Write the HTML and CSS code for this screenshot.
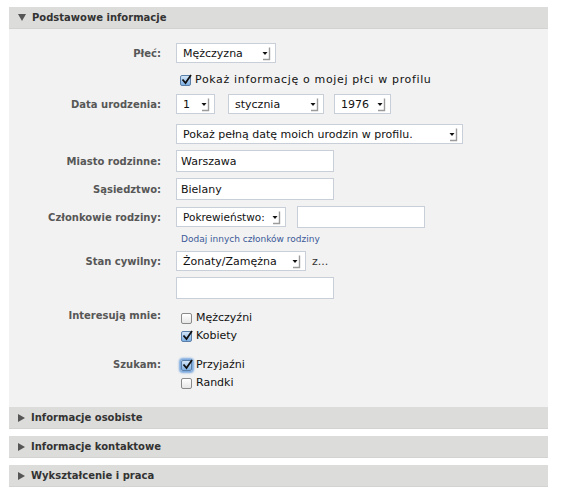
FILE: index.html
```html
<!DOCTYPE html>
<html lang="pl">
<head>
<meta charset="utf-8">
<link rel="stylesheet" href="styles.css">
</head>
<body>
<div class="panel">
  <div class="head open"><span class="tri-down"></span>Podstawowe informacje</div>
  <div class="body">
    <div class="row r-plec">
      <div class="label">Płeć:</div>
      <div class="ctrl">
        <div class="sel w-plec"><span class="val">Mężczyzna</span><svg class="arr" width="12" height="16" viewBox="0 0 12 16"><path d="M2.5 7h5l-2.5 3z" fill="#111"/><path d="M9.5 2.5v12H3" stroke="#9b9b9b" stroke-width="1.4" fill="none"/></svg></div>
      </div>
    </div>
    <div class="row r-chk">
      <div class="label"></div>
      <div class="ctrl"><label class="cb wide"><span class="box on"><svg width="13" height="13" viewBox="0 0 13 13"><path d="M2.5 6.5l3 3.5 5.5-8" stroke="#111" stroke-width="1.8" fill="none"/></svg></span>Pokaż informację o mojej płci w profilu</label></div>
    </div>
    <div class="row r-data">
      <div class="label">Data urodzenia:</div>
      <div class="ctrl">
        <div class="sel w-day"><span class="val">1</span><svg class="arr" width="12" height="16" viewBox="0 0 12 16"><path d="M2.5 7h5l-2.5 3z" fill="#111"/><path d="M9.5 2.5v12H3" stroke="#9b9b9b" stroke-width="1.4" fill="none"/></svg></div>
        <div class="sel w-mon"><span class="val">stycznia</span><svg class="arr" width="12" height="16" viewBox="0 0 12 16"><path d="M2.5 7h5l-2.5 3z" fill="#111"/><path d="M9.5 2.5v12H3" stroke="#9b9b9b" stroke-width="1.4" fill="none"/></svg></div>
        <div class="sel w-year"><span class="val">1976</span><svg class="arr" width="12" height="16" viewBox="0 0 12 16"><path d="M2.5 7h5l-2.5 3z" fill="#111"/><path d="M9.5 2.5v12H3" stroke="#9b9b9b" stroke-width="1.4" fill="none"/></svg></div>
      </div>
    </div>
    <div class="row r-full">
      <div class="label"></div>
      <div class="ctrl">
        <div class="sel w-full"><span class="val">Pokaż pełną datę moich urodzin w profilu.</span><svg class="arr" width="12" height="16" viewBox="0 0 12 16"><path d="M2.5 7h5l-2.5 3z" fill="#111"/><path d="M9.5 2.5v12H3" stroke="#9b9b9b" stroke-width="1.4" fill="none"/></svg></div>
      </div>
    </div>
    <div class="row r-miasto">
      <div class="label">Miasto rodzinne:</div>
      <div class="ctrl"><div class="inp w-inp">Warszawa</div></div>
    </div>
    <div class="row r-sas">
      <div class="label">Sąsiedztwo:</div>
      <div class="ctrl"><div class="inp w-inp">Bielany</div></div>
    </div>
    <div class="row r-czl">
      <div class="label">Członkowie rodziny:</div>
      <div class="ctrl gap2">
        <div class="sel w-pok"><span class="val sm">Pokrewieństwo:</span><svg class="arr" width="12" height="16" viewBox="0 0 12 16"><path d="M2.5 7h5l-2.5 3z" fill="#111"/><path d="M9.5 2.5v12H3" stroke="#9b9b9b" stroke-width="1.4" fill="none"/></svg></div>
        <div class="inp w-inp2"></div>
      </div>
    </div>
    <div class="row r-link">
      <div class="label"></div>
      <div class="ctrl"><a class="link" href="#">Dodaj innych członków rodziny</a></div>
    </div>
    <div class="row r-stan">
      <div class="label">Stan cywilny:</div>
      <div class="ctrl gap3">
        <div class="sel w-stan"><span class="val">Żonaty/Zamężna</span><svg class="arr" width="12" height="16" viewBox="0 0 12 16"><path d="M2.5 7h5l-2.5 3z" fill="#111"/><path d="M9.5 2.5v12H3" stroke="#9b9b9b" stroke-width="1.4" fill="none"/></svg></div>
        <span class="z">z...</span>
      </div>
    </div>
    <div class="row r-stan2">
      <div class="label"></div>
      <div class="ctrl"><div class="inp w-inp"></div></div>
    </div>
    <div class="row r-int">
      <div class="label">Interesują mnie:</div>
      <div class="ctrl col">
        <label class="cb"><span class="box"></span>Mężczyźni</label>
        <label class="cb"><span class="box on"><svg width="13" height="13" viewBox="0 0 13 13"><path d="M2.5 6.5l3 3.5 5.5-8" stroke="#111" stroke-width="1.8" fill="none"/></svg></span>Kobiety</label>
      </div>
    </div>
    <div class="row r-szu">
      <div class="label">Szukam:</div>
      <div class="ctrl col">
        <label class="cb"><span class="box on focus"><svg width="13" height="13" viewBox="0 0 13 13"><path d="M2.5 6.5l3 3.5 5.5-8" stroke="#111" stroke-width="1.8" fill="none"/></svg></span>Przyjaźni</label>
        <label class="cb"><span class="box"></span>Randki</label>
      </div>
    </div>
  </div>
  <div class="head closed"><span class="tri-right"></span>Informacje osobiste</div>
  <div class="head closed h3"><span class="tri-right"></span>Informacje kontaktowe</div>
  <div class="head closed h3"><span class="tri-right"></span>Wykształcenie i praca</div>
</div>
</body>
</html>
```

FILE: styles.css
```css
html, body {
  margin: 0;
  padding: 0;
  background: #ffffff;
}
body {
  font-family: "DejaVu Sans", "Liberation Sans", sans-serif;
  font-size: 10px;
  color: #222;
}
.panel {
  margin: 7px 0 0 9px;
  width: 539px;
}
.head {
  height: 22px;
  background: #dcdcda;
  border-bottom: 1px solid #d3d3d1;
  box-sizing: border-box;
  display: flex;
  align-items: center;
  padding-left: 9px;
  font-weight: bold;
  font-size: 10px;
  color: #333;
}
.h3 { margin-top: 7px; }
.tri-down {
  width: 0; height: 0;
  border-left: 4px solid transparent;
  border-right: 4px solid transparent;
  border-top: 7px solid #555;
  margin-right: 6px;
}
.tri-right {
  width: 0; height: 0;
  border-top: 4px solid transparent;
  border-bottom: 4px solid transparent;
  border-left: 7px solid #555;
  margin-right: 6px;
}
.body {
  background: #f2f2f2;
  padding: 14px 0 17px 0;
}
.row {
  display: grid;
  grid-template-columns: 152px 1fr;
  column-gap: 15px;
  align-items: center;
}
.label {
  text-align: right;
  font-weight: bold;
  color: #575757;
  font-size: 10px;
}
.ctrl {
  display: flex;
  align-items: center;
}
.ctrl.gap2 { gap: 11px; }
.ctrl.gap3 { gap: 6px; }
.ctrl.col {
  flex-direction: column;
  align-items: flex-start;
  gap: 4px;
}
.sel {
  height: 20px;
  box-sizing: border-box;
  background: #fff;
  border: 1px solid #c9cfd9;
  display: flex;
  align-items: center;
  justify-content: space-between;
  padding: 0 3px 0 6px;
  font-size: 11px;
  color: #111;
}
.val.sm { font-size: 10.5px; }
.arr { flex: none; }
.w-plec { width: 100px; }
.w-day { width: 39px; margin-right: 13px; }
.w-mon { width: 96px; margin-right: 10px; }
.w-year { width: 57px; }
.w-full { width: 287px; }
.w-pok { width: 110px; }
.w-stan { width: 130px; }
.inp {
  height: 22px;
  box-sizing: border-box;
  background: #fff;
  border: 1px solid #c9cfd9;
  display: flex;
  align-items: center;
  padding: 0 4px;
  font-size: 11px;
  color: #111;
}
.w-inp { width: 158px; }
.w-inp2 { width: 128px; }
.r-chk { margin-top: 10px; }
.r-data { margin-top: 7px; }
.r-full { margin-top: 10px; }
.r-miasto { margin-top: 6px; }
.r-sas { margin-top: 6px; }
.r-czl { margin-top: 6px; }
.r-link { margin-top: 5px; }
.r-stan { margin-top: 6px; }
.r-stan2 { margin-top: 6px; }
.r-int { margin-top: 12px; align-items: start; }
.r-szu { margin-top: 15px; align-items: start; }
.r-int .label, .r-szu .label { line-height: 14px; }
.r-int .label { margin-top: -2px; }
.r-int .ctrl, .r-szu .ctrl { padding-left: 5px; }
.cb {
  display: flex;
  align-items: center;
  font-size: 11px;
  color: #111;
  line-height: 14px;
}
.cb.wide {
  letter-spacing: 0.65px;
  padding-left: 4px;
}
.box {
  width: 11px;
  height: 11px;
  box-sizing: border-box;
  border: 1px solid #8a8a8a;
  border-radius: 2px;
  background: linear-gradient(#fff, #e6e6e6);
  margin-right: 4px;
  position: relative;
  flex: none;
}
.box.on {
  background: linear-gradient(#d3e5f8, #7fb0e4);
  border-color: #5a7fa8;
}
.box svg {
  position: absolute;
  left: -1px;
  top: -3px;
}
.box.focus {
  box-shadow: 0 0 2px 2px #7aa7dd;
}
.link {
  color: #3b5998;
  text-decoration: none;
  font-size: 9px;
  padding-left: 5px;
  line-height: 12px;
}
.z { font-size: 11px; color: #333; }
```
